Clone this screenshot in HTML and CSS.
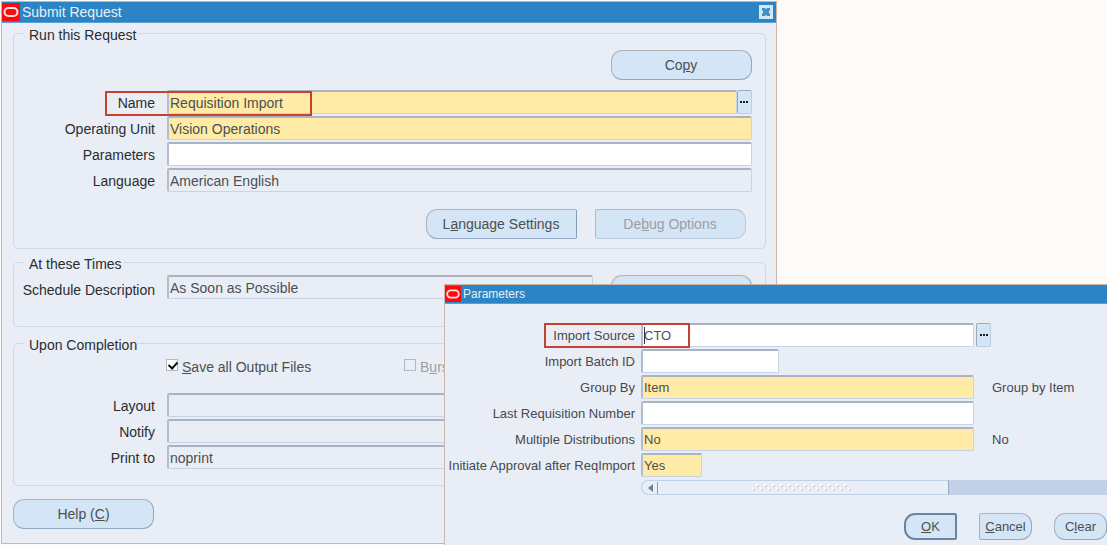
FILE: index.html
```
<!DOCTYPE html>
<html lang="en">
<head>
  <meta charset="UTF-8" />
  <meta name="viewport" content="width=device-width, initial-scale=1.0"/>
  <title>Submit Request</title>
  <link rel="stylesheet" href="styles.css">
</head>
<body>
  <main class="window request-window">
    <header class="title-bar">
      <svg class="logo" viewBox="0 0 18 18"><rect width="18" height="18" fill="#fb0a12"/><rect x="2.5" y="5" width="13" height="8" rx="4" fill="none" stroke="#ffe3dc" stroke-width="2"/></svg>
      <h1>Submit Request</h1>
      <button type="button" class="close-btn" aria-label="Close">
        <svg viewBox="0 0 14 14"><path d="M3 3h3l1 1.500L8 3h3v2L9.500 7 11 9v2H8L7 9.500 6 11H3V9l1.500-2L3 5z" fill="#3f8dc8"/></svg>
      </button>
    </header>

    <form class="request-form">
      <fieldset class="run-group">
        <legend>Run this Request</legend>
        <div class="copy-row"><button type="button" class="btn btn-wide">Co<u>p</u>y</button></div>
        <div class="rows">
          <div class="row">
            <label for="name">Name</label>
            <input type="text" id="name" class="required" value="Requisition Import" />
            <button type="button" class="lov" aria-label="List of values"><i></i><i></i><i></i></button>
            <span class="highlight highlight-name"></span>
          </div>
          <div class="row">
            <label for="unit">Operating Unit</label>
            <input type="text" id="unit" class="required" value="Vision Operations" />
          </div>
          <div class="row">
            <label for="params">Parameters</label>
            <input type="text" id="params" />
          </div>
          <div class="row">
            <label for="language">Language</label>
            <input type="text" id="language" class="readonly" value="American English" readonly />
          </div>
        </div>
        <div class="option-buttons">
          <button type="button" class="btn first">L<u>a</u>nguage Settings</button>
          <button type="button" class="btn last" disabled>De<u>b</u>ug Options</button>
        </div>
      </fieldset>

      <fieldset class="times-group">
        <legend>At these Times</legend>
        <div class="row schedule-row">
          <label for="schedule">Schedule Description</label>
          <input type="text" id="schedule" class="readonly" value="As Soon as Possible" readonly />
          <button type="button" class="btn btn-wide">Sc<u>h</u>edule...</button>
        </div>
      </fieldset>

      <fieldset class="completion-group">
        <legend>Upon Completion</legend>
        <div class="checks">
          <label class="check"><input type="checkbox" checked /><span><u>S</u>ave all Output Files</span></label>
          <label class="check off"><input type="checkbox" disabled /><span>B<u>u</u>rst Output</span></label>
        </div>
        <div class="rows">
          <div class="row">
            <label for="layout">Layout</label>
            <input type="text" id="layout" class="readonly" readonly />
          </div>
          <div class="row">
            <label for="notify">Notify</label>
            <input type="text" id="notify" class="readonly" readonly />
          </div>
          <div class="row">
            <label for="print">Print to</label>
            <input type="text" id="print" class="readonly" value="noprint" readonly />
          </div>
        </div>
      </fieldset>

      <button type="button" class="btn btn-wide">Help (<u>C</u>)</button>
    </form>
  </main>

  <section class="window param-window">
    <header class="title-bar">
      <svg class="logo" viewBox="0 0 18 18"><rect width="18" height="18" fill="#fb0a12"/><rect x="2.500" y="5" width="13" height="8" rx="4" fill="none" stroke="#ffe3dc" stroke-width="2"/></svg>
      <h2>Parameters</h2>
    </header>

    <form class="param-form">
      <div class="rows">
        <div class="row">
          <label for="source">Import Source</label>
          <input type="text" id="source" value="CTO" />
          <span class="side"><button type="button" class="lov" aria-label="List of values"><i></i><i></i><i></i></button></span>
          <span class="caret"></span>
          <span class="highlight highlight-source"></span>
        </div>
        <div class="row">
          <label for="batch">Import Batch ID</label>
          <input type="text" id="batch" class="medium" />
        </div>
        <div class="row">
          <label for="group">Group By</label>
          <input type="text" id="group" class="required" value="Item" />
          <span class="side note">Group by Item</span>
        </div>
        <div class="row">
          <label for="last">Last Requisition Number</label>
          <input type="text" id="last" />
          <span class="side"></span>
        </div>
        <div class="row">
          <label for="multiple">Multiple Distributions</label>
          <input type="text" id="multiple" class="required" value="No" />
          <span class="side note">No</span>
        </div>
        <div class="row">
          <label for="approval">Initiate Approval after ReqImport</label>
          <input type="text" id="approval" class="required short" value="Yes" />
        </div>
      </div>

      <div class="scrollbar">
        <div class="thumb">
          <svg class="arrow" viewBox="0 0 12 12"><path d="M6 2v8L1 6z" fill="#6f7c90"/><path d="M10.500 0v12" stroke="#8f9aac"/></svg>
          <svg class="grip" width="100" height="8">
            <defs>
              <pattern id="dots" width="8" height="8" patternUnits="userSpaceOnUse">
                <path d="M4 2l2-2M0 6l2-2" stroke="#fff" stroke-width="2"/>
                <path d="M5 3l2-2M1 7l2-2" stroke="#a9bdd6"/>
              </pattern>
            </defs>
            <rect width="100" height="8" fill="url(#dots)"/>
          </svg>
        </div>
      </div>

      <div class="actions">
        <button type="submit" class="btn first default"><u>O</u>K</button>
        <button type="button" class="btn last"><u>C</u>ancel</button>
        <button type="reset" class="btn">C<u>l</u>ear</button>
      </div>
    </form>
  </section>
</body>
</html>
```
FILE: styles.css
```
* {
  box-sizing: border-box;
}

body {
  margin: 0;
  padding: 1px;
  position: relative;
  min-height: 100vh;
  overflow: hidden;
  background-color: #fcfbfa;
  color: #2a2c30;
  font-family: "Liberation Sans", Arial, sans-serif;
  font-size: 14px;
  line-height: 16px;
}

.window {
  background-color: #e9eef6;
  border: 1px solid #cbb5a8;
}

.request-window {
  width: calc(70% + 2px);
}

.param-window {
  position: absolute;
  top: 284px;
  left: 444px;
  right: 0;
  bottom: 0;
  border-right: none;
  border-bottom: none;
  font-size: 13px;
  color: #45484d;
}

/* title bars */
.title-bar {
  display: flex;
  align-items: center;
  gap: 2px;
  height: 21px;
  padding-right: 3px;
  background-color: #2d84c4;
  border-bottom: 1px solid #5d9fd4;
  color: #e4f0fa;
}

.param-window .title-bar {
  height: 19px;
}

.title-bar h1,
.title-bar h2 {
  flex: 1;
  margin: 0;
  font-size: 14px;
  font-weight: normal;
}

.title-bar h2 {
  font-size: 12px;
}

.logo {
  width: 18px;
  height: 18px;
}

.param-window .logo {
  width: 16px;
  height: 16px;
}

.close-btn {
  width: 14px;
  height: 14px;
  padding: 0;
  border: none;
  background-color: #d5e6f4;
}

.close-btn svg {
  display: block;
}

/* groups */
.request-form {
  padding: 1px 10px 14px 11px;
}

fieldset {
  min-width: 0;
  margin: 0 0 4px;
  padding: 0 13px 9px 0;
  border: 1px solid #c9d8ea;
  border-radius: 5px;
}

legend {
  margin-left: 10px;
  padding: 3px 1px 0 5px;
}

.times-group {
  padding: 3px 13px 27px 0;
  margin-bottom: 7px;
}

.completion-group {
  padding-bottom: 16px;
  margin-bottom: 13px;
}

.rows {
  display: flex;
  flex-direction: column;
  gap: 2px;
}

.row {
  display: flex;
  align-items: center;
  position: relative;
}

.row label {
  flex: none;
  width: 141px;
  margin-right: 12px;
  padding-top: 2px;
  text-align: right;
}

.row input {
  flex: 1;
  min-width: 0;
  height: 24px;
  padding: 0 0 0 1px;
  border: 1px solid #c5d4e8;
  border-top: 2px solid #abb3c2;
  border-left: 2px solid #b4bccb;
  border-radius: 2px;
  background-color: #fff;
  color: #4c4f52;
  font-family: inherit;
  font-size: inherit;
  outline: none;
}

.row input.required {
  background-color: #ffeba5;
}

.row input.readonly {
  background-color: #e9eef6;
}

/* buttons */
.btn {
  height: 30px;
  padding: 0;
  border: 1px solid #93a8c4;
  border-top-color: #b0b4ba;
  border-left-color: #a9b4c3;
  border-radius: 11px;
  background-color: #d4e5f5;
  color: #4c4f52;
  font-family: inherit;
  font-size: inherit;
}

.btn-wide {
  width: 141px;
}

.btn.first {
  border-radius: 11px 2px 2px 11px;
  border-right-color: #7f9dbd;
}

.btn.last {
  border-radius: 2px 11px 11px 2px;
}

.btn:disabled {
  border-color: #b5bac2 #bccbde #bccbde #b5bac2;
  color: #9a9ea4;
}

.lov {
  display: flex;
  align-items: center;
  justify-content: center;
  gap: 1px;
  width: 15px;
  height: 24px;
  padding: 0;
  border: 1px solid #bccde2;
  border-top-color: #9fa9b8;
  border-left-color: #9fa9b8;
  border-radius: 2px;
  background-color: #d4e5f5;
}

.lov i {
  width: 2px;
  height: 2px;
  background-color: #1b1b1b;
}

.copy-row {
  display: flex;
  justify-content: flex-end;
  margin: 7px 0 10px;
}

.option-buttons {
  display: flex;
  justify-content: flex-end;
  gap: 18px;
  margin-top: 17px;
  padding-right: 6px;
}

.option-buttons .btn {
  width: 151px;
}

.schedule-row {
  align-items: flex-start;
  height: 24px;
}

.schedule-row label {
  padding-top: 7px;
}

.schedule-row .btn {
  margin-left: 18px;
}

/* checkboxes */
.checks {
  display: flex;
  margin: 5px 0 18px 152px;
}

.check {
  display: flex;
  width: 238px;
  color: #4c4f52;
}

.check span {
  padding-top: 1px;
}

.check input {
  appearance: none;
  position: relative;
  width: 12px;
  height: 12px;
  margin: 1px 4px 0 0;
  border: 1px solid #b3b8c0;
  background-color: #fff;
}

.check input:checked::after {
  content: "";
  position: absolute;
  left: 3px;
  top: 0;
  width: 4px;
  height: 7px;
  border: solid #111;
  border-width: 0 2px 2px 0;
  transform: rotate(42deg);
}

.check.off {
  color: #9a9ea4;
}

.check.off input {
  background-color: #e9eef6;
}

/* red marker boxes */
.highlight {
  position: absolute;
  border: 2px solid #c8402f;
  pointer-events: none;
}

.highlight-name {
  left: 91px;
  top: 1px;
  width: 207px;
  height: 25px;
}

.highlight-source {
  left: 99px;
  top: 0;
  width: 146px;
  height: 25px;
}

/* parameters form */
.param-form {
  padding-top: 19px;
}

.param-form .row label {
  width: 190px;
  margin-right: 6px;
}

.param-form .row input.medium {
  flex: none;
  width: 138px;
}

.param-form .row input.short {
  flex: none;
  width: 61px;
}

.side {
  flex: none;
  width: 133px;
  padding-left: 2px;
}

.side.note {
  padding: 2px 0 0 18px;
}

.caret {
  position: absolute;
  left: 199px;
  top: 4px;
  width: 1px;
  height: 17px;
  background-color: #333;
}

.scrollbar {
  height: 15px;
  margin: 3px 0 0 196px;
  border-radius: 8px 0 0 8px;
  background-color: #c2d0e8;
}

.thumb {
  display: flex;
  align-items: center;
  justify-content: space-between;
  width: 66%;
  height: 15px;
  padding: 0 96px 0 5px;
  border: 1px solid #c0d2e8;
  border-right: 1px solid #93a9c6;
  border-radius: 8px 0 0 8px;
  background-color: #e9eef6;
}

.arrow {
  width: 12px;
  height: 12px;
}

.actions {
  display: flex;
  justify-content: flex-end;
  gap: 22px;
  margin-top: 18px;
}

.actions .btn {
  width: 53px;
  height: 27px;
}

.actions .default {
  border: 2px solid #6a84a8;
}
```
